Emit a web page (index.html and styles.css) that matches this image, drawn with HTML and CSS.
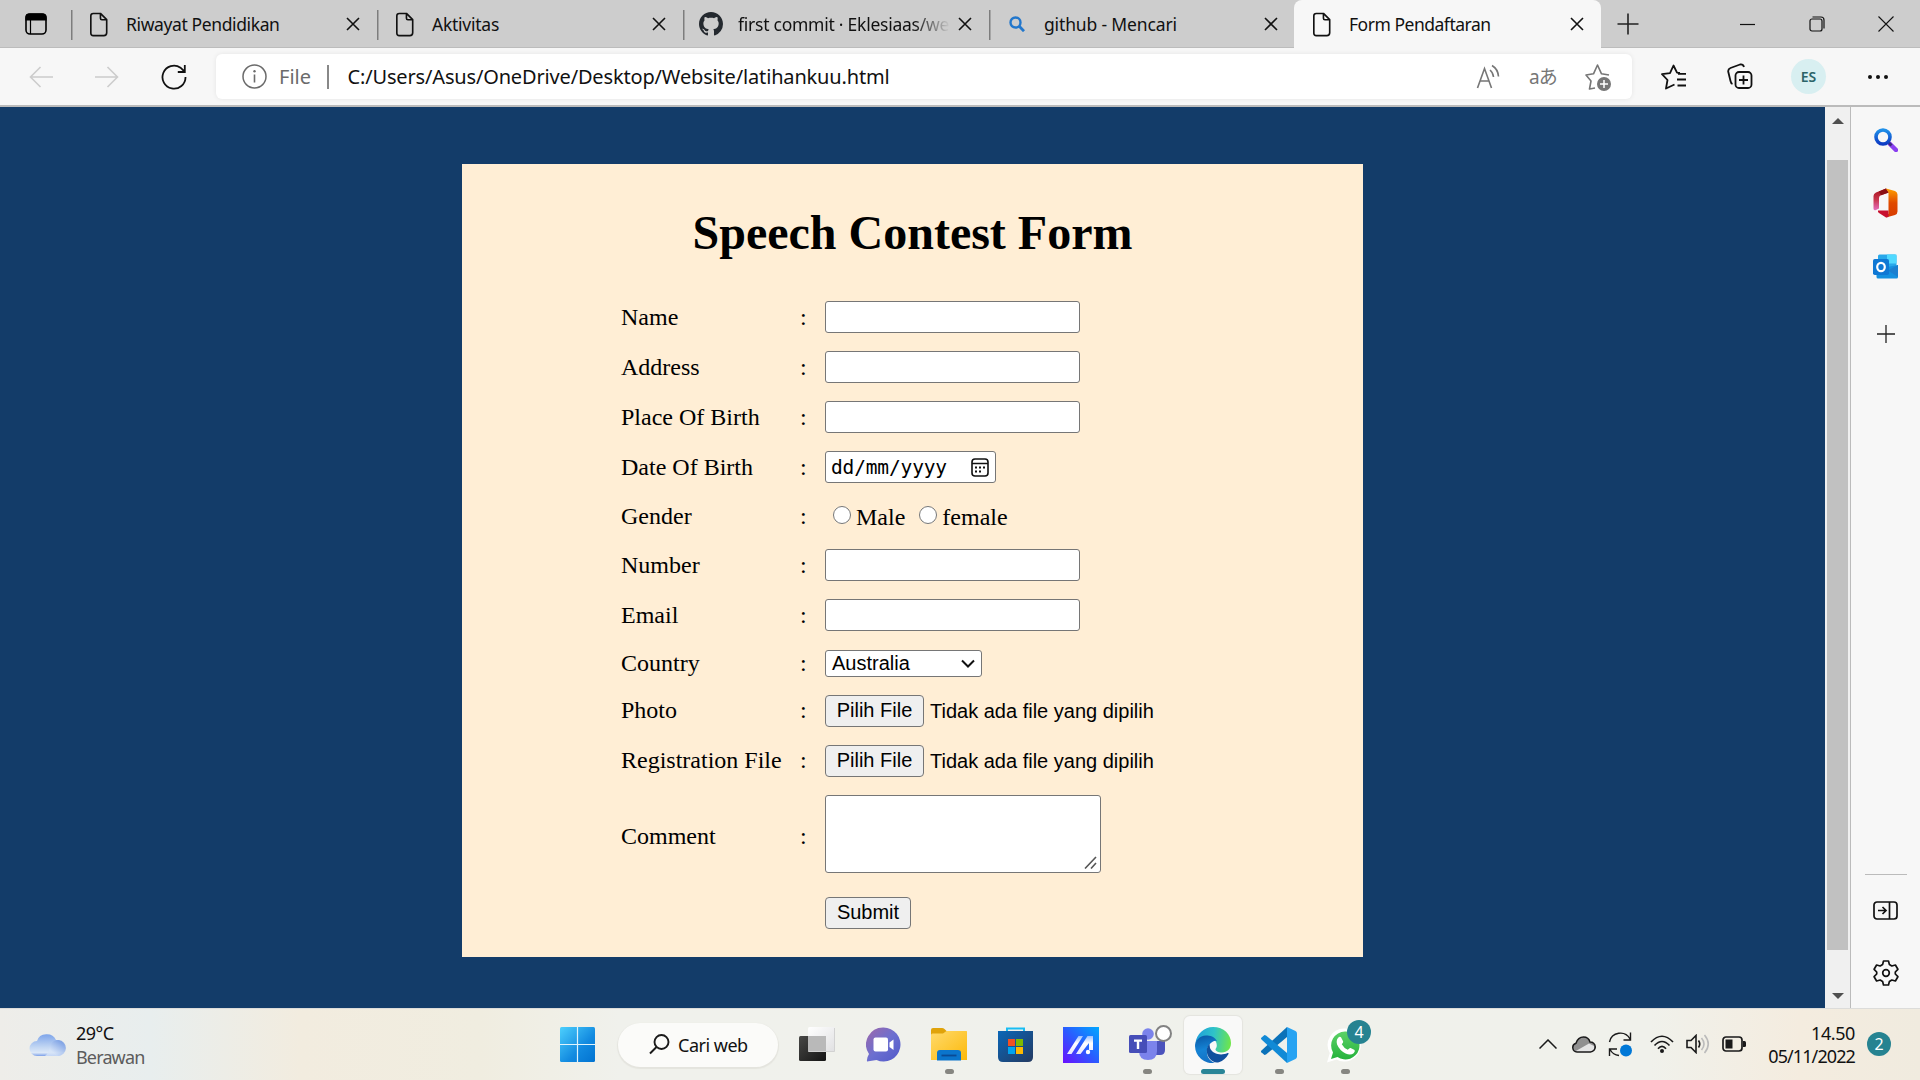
FILE: index.html
```html
<!DOCTYPE html>
<html lang="id">
<head>
<meta charset="utf-8">
<title>Form Pendaftaran</title>
<link rel="stylesheet" href="styles.css">
</head>
<body>
<svg class="defs" width="0" height="0">
  <defs>
    <symbol id="doc" viewBox="0 0 20 26"><path d="M4 1.5h7.5l6.5 6.500v13.500q0 3-3 3H4q-2.500 0-2.500-2.500V4Q1.500 1.500 4 1.500ZM11.500 1.500v5q0 1.500 1.500 1.500h5" fill="none" stroke="#111" stroke-width="1.7" stroke-linejoin="round"/></symbol>
    <symbol id="x" viewBox="0 0 14 14"><path d="M1 1l12 12M13 1L1 13" stroke="#111" stroke-width="1.6" fill="none"/></symbol>
    <linearGradient id="win" x1="0" y1="0" x2="1" y2="1"><stop offset="0" stop-color="#4dd0fd"/><stop offset=".6" stop-color="#128ae0"/><stop offset="1" stop-color="#0273d1"/></linearGradient>
    <linearGradient id="cloud" x1="0" y1="0" x2="0" y2="1"><stop offset="0" stop-color="#7ea5ea"/><stop offset=".6" stop-color="#c3d7f3"/><stop offset=".85" stop-color="#dce8f8"/><stop offset="1" stop-color="#7b9fe8"/></linearGradient>
    <linearGradient id="cloud2" x1="1" y1="0" x2="0" y2="1"><stop offset="0" stop-color="#5a86dc"/><stop offset=".7" stop-color="#d6e4f8"/></linearGradient>
    <linearGradient id="dark" x1="0" y1="0" x2="1" y2="1"><stop offset="0" stop-color="#484846"/><stop offset="1" stop-color="#141414"/></linearGradient>
    <linearGradient id="glass" x1="0" y1="0" x2="1" y2="1"><stop offset="0" stop-color="#ffffff"/><stop offset="1" stop-color="#e0e0e2"/></linearGradient>
    <linearGradient id="chat" x1="0" y1="0" x2="1" y2="1"><stop offset="0" stop-color="#a068a8"/><stop offset=".5" stop-color="#6c6fd0"/><stop offset="1" stop-color="#5059c9"/></linearGradient>
    <linearGradient id="folder" x1="0" y1="0" x2="1" y2="1"><stop offset="0" stop-color="#ffda6c"/><stop offset="1" stop-color="#fcb90a"/></linearGradient>
    <linearGradient id="store" x1="0" y1="0" x2="1" y2="1"><stop offset="0" stop-color="#0a67b8"/><stop offset="1" stop-color="#243a61"/></linearGradient>
    <linearGradient id="arm" x1="0" y1="1" x2="1" y2="0"><stop offset="0" stop-color="#6a10ff"/><stop offset=".5" stop-color="#2a5cff"/><stop offset="1" stop-color="#00a8ff"/></linearGradient>
    <linearGradient id="armw" x1="0" y1="1" x2="0" y2="0"><stop offset="0" stop-color="#e8e8ff"/><stop offset=".6" stop-color="#fff"/><stop offset="1" stop-color="#9cc0ff"/></linearGradient>
    <linearGradient id="edgeTop" x1="0" y1=".4" x2="1" y2=".5"><stop offset="0" stop-color="#1f9fdc"/><stop offset=".5" stop-color="#2fc3c8"/><stop offset="1" stop-color="#6fe64a"/></linearGradient>
    <linearGradient id="edgeMid" x1=".3" y1="0" x2=".5" y2="1"><stop offset="0" stop-color="#0a5aa8"/><stop offset=".5" stop-color="#1583d4"/><stop offset="1" stop-color="#1470c4"/></linearGradient>
    <linearGradient id="wa" x1="0" y1="0" x2="0" y2="1"><stop offset="0" stop-color="#5cd267"/><stop offset="1" stop-color="#25b23c"/></linearGradient>
    <linearGradient id="lens" x1="0" y1="0" x2="0" y2="1"><stop offset="0" stop-color="#1f8fe8"/><stop offset="1" stop-color="#0d3bc4"/></linearGradient>
    <linearGradient id="offL" x1="0" y1="0" x2="0" y2="1"><stop offset="0" stop-color="#a8101c"/><stop offset=".5" stop-color="#c8354c"/><stop offset="1" stop-color="#e56fc0"/></linearGradient>
    <linearGradient id="offR" x1="0" y1="0" x2="0" y2="1"><stop offset="0" stop-color="#ffa000"/><stop offset=".5" stop-color="#e04a00"/><stop offset="1" stop-color="#d83b01"/></linearGradient>
  </defs>
</svg>
<div class="screen">
  <header class="tabs">
    <div class="tab-menu"><svg width="22" height="22" viewBox="0 0 22 22"><rect x="1" y="1" width="20" height="20" rx="4" fill="none" stroke="#000" stroke-width="1.6"/><path d="M1 7V4q0-3 3-3h14q3 0 3 3v3ZM5.500 7v14" stroke="#000" stroke-width="1.2"/></svg></div>
    <div class="tab"><svg class="doc"><use href="#doc"/></svg><span class="tab-title t1">Riwayat Pendidikan</span><svg class="x"><use href="#x"/></svg></div>
    <div class="tab"><svg class="doc"><use href="#doc"/></svg><span class="tab-title">Aktivitas</span><svg class="x"><use href="#x"/></svg></div>
    <div class="tab"><svg class="gh" viewBox="0 0 16 16"><path fill="#24292f" d="M8 0C3.580 0 0 3.580 0 8c0 3.540 2.290 6.530 5.470 7.590.4.070.55-.17.55-.38 0-.19-.01-.82-.01-1.490-2.010.37-2.530-.49-2.690-.94-.09-.23-.48-.94-.82-1.130-.28-.15-.68-.52-.01-.53.63-.01 1.080.58 1.230.82.72 1.210 1.870.87 2.330.66.07-.52.28-.87.51-1.070-1.780-.2-3.640-.89-3.640-3.950 0-.87.31-1.590.82-2.150-.08-.2-.36-1.020.08-2.120 0 0 .67-.21 2.200.82.64-.18 1.320-.27 2-.27s1.360.09 2 .27c1.530-1.040 2.200-.82 2.200-.82.44 1.100.16 1.920.08 2.120.51.56.82 1.270.82 2.150 0 3.070-1.870 3.750-3.650 3.950.29.25.54.73.54 1.480 0 1.070-.01 1.930-.01 2.200 0 .21.15.46.55.38A8.010 8.010 0 0 0 16 8c0-4.420-3.580-8-8-8Z"/></svg><span class="tab-title fade">first commit · Eklesiaas/we</span><svg class="x"><use href="#x"/></svg></div>
    <div class="tab"><svg class="srch" viewBox="0 0 16 16"><circle cx="6.500" cy="6.500" r="5" fill="none" stroke="#2277cc" stroke-width="2.400"/><path d="M10 10l5 5.200" stroke="#2277cc" stroke-width="2.800"/></svg><span class="tab-title t4">github - Mencari</span><svg class="x"><use href="#x"/></svg></div>
    <div class="tab active"><svg class="doc"><use href="#doc"/></svg><span class="tab-title t5">Form Pendaftaran</span><svg class="x"><use href="#x"/></svg></div>
    <svg class="newtab" width="22" height="22" viewBox="0 0 22 22"><path d="M11 .5v21M.5 11h21" stroke="#222" stroke-width="1.600"/></svg>
    <div class="win-buttons">
      <svg width="16" height="16" viewBox="0 0 16 16"><path d="M0 8.500h15" stroke="#111" stroke-width="1.200"/></svg>
      <svg width="16" height="16" viewBox="0 0 16 16"><rect x="1" y="3" width="12" height="12" rx="2" fill="none" stroke="#111" stroke-width="1.200"/><path d="M3.500 1h8.500q3 0 3 3v8.500" fill="none" stroke="#111" stroke-width="1.200"/></svg>
      <svg width="16" height="16" viewBox="0 0 16 16"><path d="M.5 .5l15 15M15.500 .5l-15 15" stroke="#111" stroke-width="1.100"/></svg>
    </div>
  </header>

  <nav class="toolbar">
    <div class="nav-buttons">
      <svg width="24" height="24" viewBox="0 0 24 24" fill="none" stroke="#ccc" stroke-width="1.600"><path d="M24 12H1.500M11.500 2L1.500 12l10 10"/></svg>
      <svg width="24" height="24" viewBox="0 0 24 24" fill="none" stroke="#ccc" stroke-width="1.600"><path d="M0 12h22.500M12.500 2l10 10-10 10"/></svg>
      <svg width="26" height="26" viewBox="0 0 26 26" fill="none" stroke="#111" stroke-width="1.800"><path d="M24.500 13A11.500 11.500 0 1 1 19.500 3.700L23.500 7.500M23.800 1v7h-7"/></svg>
    </div>
    <div class="address">
      <svg width="25" height="25" viewBox="0 0 25 25"><circle cx="12.500" cy="12.500" r="11.500" fill="none" stroke="#6b6b6b" stroke-width="1.500"/><path d="M12.500 10.500v8" stroke="#6b6b6b" stroke-width="1.600"/><circle cx="12.500" cy="7.300" r="1.200" fill="#6b6b6b"/></svg>
      <span class="scheme">File</span><i class="bar"></i>
      <span class="url">C:/Users/Asus/OneDrive/Desktop/Website/latihankuu.html</span>
      <div class="address-icons">
        <svg width="26" height="26" viewBox="0 0 26 26" fill="none" stroke="#767676" stroke-width="1.600"><path d="M1.500 24L8.500 4.500 15.500 24M4 17h9M14 6q3 2.500 3.500 7M16 1.500q6 3.500 6.500 11"/></svg>
        <span class="translate">aあ</span>
        <svg width="26" height="28" viewBox="0 0 26 28"><path d="M10 25l-5.500 1 1.500-8L1 12l7.500-1.200L12.500 2l4 8.800L24 12" fill="none" stroke="#767676" stroke-width="1.600" stroke-linejoin="round"/><circle cx="19" cy="21" r="7" fill="#767676"/><path d="M19 17v8M15 21h8" stroke="#fff" stroke-width="1.500"/></svg>
      </div>
    </div>
    <div class="tools">
      <svg width="26" height="26" viewBox="0 0 26 26" fill="none" stroke="#111" stroke-width="1.800" stroke-linejoin="round"><path d="M13.500 20.500L5 24.500l1.500-8.500L1 10.200l8-1L12.500 1.500l3.500 7.200 3 .3M17 9.800h8M16 15.500h9M16.500 21.500h8.500"/></svg>
      <svg width="26" height="27" viewBox="0 0 26 27" fill="none" stroke="#111" stroke-width="1.800"><rect x="8.500" y="9" width="16" height="16" rx="3.500"/><path d="M16.500 12.500v9M12 17h9M5.500 21Q4 20.500 3.500 18L1.200 8.500Q1 6 3.500 5L13 1.500q3-.7 4 2.500"/></svg>
      <span class="avatar">ES</span>
      <svg width="22" height="6" viewBox="0 0 22 6" fill="#111"><circle cx="3" cy="3" r="2"/><circle cx="11" cy="3" r="2"/><circle cx="19" cy="3" r="2"/></svg>
    </div>
  </nav>

  <div class="middle">
    <main class="page">
      <form class="card">
        <h1>Speech Contest Form</h1>
        <div class="fields">
          <label>Name</label><span>:</span><div><input class="box" type="text"></div>
          <label>Address</label><span>:</span><div><input class="box" type="text"></div>
          <label>Place Of Birth</label><span>:</span><div><input class="box" type="text"></div>
          <label>Date Of Birth</label><span>:</span><div><div class="box date"><span>dd/mm/yyyy</span><svg width="18" height="19" viewBox="0 0 18 19"><rect x="1" y="1" width="16" height="17" rx="3" fill="none" stroke="#111" stroke-width="1.600"/><path d="M1 5.500h16" stroke="#111" stroke-width="1.500"/><path d="M4 9.500h2M8 9.500h2M12 9.500h2M4 13.500h2M8 13.500h2" stroke="#111" stroke-width="2"/></svg></div></div>
          <label>Gender</label><span>:</span><div class="gender"><input type="radio" name="g"><b>Male</b><input type="radio" name="g"><b>female</b></div>
          <label>Number</label><span>:</span><div><input class="box" type="text"></div>
          <label>Email</label><span>:</span><div><input class="box" type="text"></div>
          <label>Country</label><span>:</span><div><div class="box select">Australia<svg width="14" height="9" viewBox="0 0 14 9"><path d="M1 1.500l6 6 6-6" fill="none" stroke="#111" stroke-width="2"/></svg></div></div>
          <label class="lift">Photo</label><span class="lift">:</span><div><button class="btn pick" type="button">Pilih File</button><em>Tidak ada file yang dipilih</em></div>
          <label class="lift">Registration File</label><span class="lift">:</span><div><button class="btn pick" type="button">Pilih File</button><em>Tidak ada file yang dipilih</em></div>
          <label class="lift">Comment</label><span class="lift">:</span><div class="comment"><div class="box area"><svg width="13" height="13" viewBox="0 0 13 13"><path d="M1 12.500L12 1M7 12.500l5-5.500" stroke="#555" stroke-width="1.600"/></svg></div></div>
          <label></label><span></span><div><button class="btn submit" type="button">Submit</button></div>
        </div>
      </form>
    </main>
    <div class="scrollbar"><i class="up"></i><i class="thumb"></i><i class="down"></i></div>
    <aside class="sidebar">
      <svg width="24" height="24" viewBox="0 0 24 24"><path d="M16 16l6 6" stroke="#8a3ff0" stroke-width="4.500" stroke-linecap="round"/><path d="M14.500 14.500l3 3" stroke="#3b2a80" stroke-width="3"/><circle cx="9" cy="9" r="7" fill="#f7f7f7" stroke="url(#lens)" stroke-width="3.600"/></svg>
      <svg width="25" height="30" viewBox="0 0 25 30"><path d="M13 .5L3 4.500Q.5 5.500 .5 8v12.500q0 2.500 2.500 1.500l3-1.500V10q0-2 2-2.800l7.500-2.700Z" fill="url(#offL)"/><path d="M13 .5l-7 3 2 3.700 8-2.700Z" fill="#8a0f14"/><path d="M13 .5l9 2.500q2.500 1 2.500 3.500v17q0 2.500-2.500 3.500l-9 2.500 2.500-4V4.500Z" fill="url(#offR)"/><path d="M5 22.500h10.500v6.500l-2.500.5-7-4.500Q4.500 24 5 22.500Z" fill="#c8102e"/></svg>
      <svg width="25" height="25" viewBox="0 0 25 25"><path d="M5 2q0-1.500 1.500-1.500H22q1.500 0 1.500 1.500v13H5Z" fill="#28a8ea"/><path d="M14 .5h9.500v9H14Z" fill="#50d9ff"/><path d="M5 9.500h9V18H5Z" fill="#0364b8"/><path d="M3.500 15L25 11v12q0 1.500-1.500 1.500H5q-1.500 0-1.500-1.500Z" fill="#1490df"/><path d="M15 16.500L25 11v12Z" fill="#1a7fd0"/><rect x="0" y="5" width="16" height="16" rx="1.800" fill="#0f78d4"/><ellipse cx="8" cy="13" rx="3.800" ry="4.200" fill="none" stroke="#fff" stroke-width="2.200"/></svg>
      <svg width="18" height="18" viewBox="0 0 18 18"><path d="M9 0v18M0 9h18" stroke="#222" stroke-width="1.300"/></svg>
      <i class="rule"></i>
      <svg width="25" height="19" viewBox="0 0 25 19" fill="none" stroke="#111" stroke-width="1.700"><rect x="1" y="1" width="23" height="17" rx="3"/><path d="M16.500 1v17M5 9.500h8M9.500 6l3.500 3.500L9.500 13"/></svg>
      <svg width="26" height="26" viewBox="0 0 26 26" fill="none" stroke="#111" stroke-width="1.700" stroke-linejoin="round"><path d="M10.500 1h5l.9 3.600 2.400 1.400 3.600-1 2.500 4.300L22.300 12v2l2.600 2.700-2.500 4.300-3.600-1-2.400 1.400-.9 3.600h-5l-.9-3.600L7.200 20l-3.600 1-2.500-4.300L3.700 14v-2L1.100 9.300 3.600 5l3.600 1 2.400-1.400Z"/><circle cx="13" cy="13" r="3.300"/></svg>
    </aside>
  </div>

  <footer class="taskbar">
    <div class="weather">
      <svg width="37" height="24" viewBox="0 0 37 24"><path d="M8 23a7.500 7.500 0 0 1 0-15 10 9 0 0 1 19-1A8 8 0 0 1 29 23Z" fill="url(#cloud)"/><path d="M29 23a8 8 0 1 0-8-9q-1 6-5 9Z" fill="url(#cloud2)" opacity=".8"/></svg>
      <div><p>29°C</p><p class="dim">Berawan</p></div>
    </div>
    <div class="apps">
      <div class="cell"><svg width="35" height="35" viewBox="0 0 35 35"><rect width="35" height="35" rx="1.500" fill="url(#win)"/><path d="M17.500 0v35M0 17.500h35" stroke="#dff3fc" stroke-width="1.200"/></svg></div>
      <div class="pill"><svg width="21" height="21" viewBox="0 0 21 21"><circle cx="12.500" cy="8" r="7" fill="none" stroke="#1a1a1a" stroke-width="1.900"/><path d="M7.500 13L1 19.500" stroke="#1a1a1a" stroke-width="2"/></svg><span>Cari web</span></div>
      <div class="cell"><svg width="36" height="35" viewBox="0 0 36 35"><rect y="9" width="27" height="25" rx="1.500" fill="url(#dark)"/><rect x="9" y="0" width="27" height="25" rx="1.500" fill="url(#glass)"/><path d="M9 9h18v16H10.500Q9 25 9 23.500Z" fill="#b9b9b9"/><path d="M10 24.500h25.500V1" fill="none" stroke="#d2d2d2" stroke-width="1"/></svg></div>
      <div class="cell"><svg width="35" height="35" viewBox="0 0 35 35"><path d="M17.500 .5a17 17 0 1 1-7 32.500L1 34.500Q.5 31 3 27A17 17 0 0 1 17.500 .5Z" fill="url(#chat)"/><rect x="7.500" y="10.500" width="14.500" height="14" rx="2" fill="#fff"/><path d="M23.500 15.500l4-3v10.500l-4-3Z" fill="#fff"/></svg></div>
      <div class="cell run"><svg width="36" height="35" viewBox="0 0 36 35"><path d="M0 3Q0 1 2 1h9q1.500 0 2.500 1l2 2H34q2 0 2 2v4H0Z" fill="#e0a30a"/><path d="M0 8q0-1.500 1.500-1.500H12L15.500 4H35q1 0 1 1v28H0Z" fill="url(#folder)"/><path d="M6 33.500V26q0-3 3-3h18q3 0 3 3v7.500Z" fill="#0b75cc"/><path d="M10.500 28.500h15" stroke="#0a4a94" stroke-width="1.800"/></svg></div>
      <div class="cell"><svg width="35" height="35" viewBox="0 0 35 35"><path d="M9 5V1.500h17V5" fill="none" stroke="#19bdf3" stroke-width="2"/><path d="M0 4h35v26q0 5-5 5H5q-5 0-5-5Z" fill="url(#store)"/><path d="M10 12h7v7h-7Z" fill="#f25022"/><path d="M18 12h7v7h-7Z" fill="#7fba00"/><path d="M10 20h7v7h-7Z" fill="#00a4ef"/><path d="M18 20h7v7h-7Z" fill="#ffb900"/></svg></div>
      <div class="cell"><svg width="36" height="36" viewBox="0 0 36 36"><path d="M0 0h36v36H0Z" fill="url(#arm)"/><path d="M4 27L15.500 9H20L8.500 27ZM13 27L24.500 9H30v14h-4v-7l-8.500 11Z" fill="url(#armw)"/><circle cx="25" cy="25" r="2.200" fill="#fff"/></svg></div>
      <div class="cell run"><svg class="teams" width="43" height="37" viewBox="0 0 43 37"><path d="M27 16h9v9q0 5-5 5h-4Z" fill="#4b53bc"/><circle cx="19" cy="9" r="5.800" fill="#7b83eb"/><path d="M10 16h18v10q0 9-9 9t-9-9Z" fill="#7b83eb"/><rect y="10" width="18" height="18" rx="1.500" fill="#464eb8"/><path d="M5 14.500h8v2.200h-2.800V24H7.800v-7.300H5Z" fill="#fff"/><circle cx="34.500" cy="8.500" r="7.500" fill="#fff" stroke="#828282" stroke-width="2"/></svg></div>
      <div class="cell run focus"><svg width="36" height="36" viewBox="0 0 36 36"><path d="M.5 16A18 18 0 0 1 18 0c11 0 18 7.500 18 16 0 6-4 9.500-9 9.500-4 0-6.500-1.500-6.500-3 0-1 1.300-1.800 1.300-4C21.800 13 17 10 12 10 6 10 2 13 .5 16Z" fill="url(#edgeTop)"/><path d="M22 14C19.500 9.500 15 8.500 11 8.500 4.500 9 0 13.500 0 19a17.500 17.500 0 0 0 20 17C13 33 11.500 28 12 23c.4-4 3-6.500 6-8.500q2-1.200 4-.5Z" fill="url(#edgeMid)"/><path d="M14.500 17C11 20 10.500 27 15 32q4 4.500 9 3.200 6-2 9.500-8.200.5-1.500-1-.9c-6 3-15 1.400-17.500-5Z" fill="#10509e"/></svg></div>
      <div class="cell run"><svg width="36" height="36" viewBox="0 0 36 36"><path d="M26 0v10L5 27.500 3.500 28 .3 25.300Q-.5 24.500.5 23.500Z" fill="#0b72b9"/><path d="M26 36V26L5 8.500 3.500 8 .3 10.700Q-.5 11.500.5 12.500Z" fill="#118ad6"/><path d="M26 0l8.500 4Q36 4.800 36 6.500v23q0 1.700-1.500 2.500L26 36Z" fill="#27a3f2"/></svg></div>
      <div class="cell run"><svg width="36" height="36" viewBox="0 0 36 36"><path d="M18 1.500a16.500 16.500 0 1 1-8.500 31L0 35.500 2.800 26A16.500 16.500 0 0 1 18 1.500Z" fill="#fff"/><path d="M18 4.500a14 14 0 1 1-7.500 25.500l-6.500 2 2-6.500A14 14 0 0 1 18 4.500Z" fill="url(#wa)"/><path d="M11 11q1.500-1.800 3-.8l2.200 4.300q.2 1.200-1.400 2.700 2.200 4 6 5.600 1.800-2.200 2.800-1.800l4 2q.8 1.500-1 3.200-3 2.500-8 .3-6-3-8.500-9-1.200-4 .9-6.500Z" fill="#fff"/></svg><b class="badge">4</b></div>
    </div>
    <div class="tray">
      <svg class="chev" width="18" height="10" viewBox="0 0 18 10"><path d="M.5 9.500L9 1l8.500 8.500" fill="none" stroke="#1a1a1a" stroke-width="1.500"/></svg>
      <svg width="24" height="17" viewBox="0 0 24 17"><path d="M5 16a4.500 4.500 0 0 1-1-8.800Q6 1 11.500 1q5 0 6.500 5a5 5 0 0 1 .5 10Z" fill="#909090"/><path d="M3 15.500L17 7.500l5 2.500v4l-3.500 2H5Z" fill="#e4e4e4"/><path d="M5 16a4.500 4.500 0 0 1-1-8.800Q6 1 11.500 1q5 0 6.500 5a5 5 0 0 1 .5 10Z" fill="none" stroke="#1a1a1a" stroke-width="1.500"/></svg>
      <svg width="24" height="25" viewBox="0 0 24 25"><path d="M1.500 10A11 11 0 0 1 22 7M22.500 .5v7.500h-7M11 23.500Q5 23 2 17.500M1.500 24v-7H9" fill="none" stroke="#1a1a1a" stroke-width="1.400"/><circle cx="18" cy="18.500" r="6" fill="#0078d7"/></svg>
      <svg class="wifi" width="24" height="18" viewBox="0 0 24 18"><path d="M1 7q11-11.500 22 0M4.500 10.500q7.500-8 15 0M8 13.700q4-4.500 8 0" fill="none" stroke="#1a1a1a" stroke-width="1.700"/><circle cx="12" cy="16" r="2" fill="#1a1a1a"/></svg>
      <svg width="24" height="20" viewBox="0 0 24 20" fill="none" stroke-width="1.600"><path d="M1 6.500h4l5-5v17l-5-5H1ZM12.500 6.500q2.500 3.500 0 7" stroke="#1a1a1a"/><path d="M15.500 4q5 6 0 12M18.500 1q7.500 9 0 18" stroke="#bbb"/></svg>
      <svg width="24" height="16" viewBox="0 0 24 16"><rect x="1" y="1" width="19" height="14" rx="3" fill="none" stroke="#1a1a1a" stroke-width="1.700"/><path d="M3.500 3.500h7v9h-7Z" fill="#1a1a1a"/><path d="M21 5h1.500q1.500 0 1.500 1.500v3q0 1.500-1.500 1.500H21Z" fill="#1a1a1a"/></svg>
      <div class="clock"><p>14.50</p><p class="day">05/11/2022</p></div>
      <b class="count">2</b>
    </div>
  </footer>
</div>
</body>
</html>
```
FILE: styles.css
```css
* { box-sizing: border-box; }
body { margin: 0; font-family: "Noto Sans", "Open Sans", sans-serif; color: #111; overflow: hidden; }
p { margin: 0; }
svg { display: block; flex: none; }
.defs { position: absolute; }
.screen { width: 1920px; height: 1080px; display: flex; flex-direction: column; }

.tabs { height: 48px; flex: none; background: #cdcdcd; display: flex; align-items: center; box-shadow: inset 0 -1px #bcbcbc; }
.tab-menu { width: 71px; flex: none; padding-left: 25px; }
.tab { width: 306px; flex: none; height: 48px; display: flex; align-items: center; padding: 0 17px 0 18px; background: linear-gradient(#7d7d7d, #7d7d7d) 0 10px / 1.500px 30px no-repeat; }
.doc { width: 20px; height: 25px; }
.gh { width: 24px; height: 24px; margin: 0 -2px; }
.srch { width: 16px; height: 16px; margin: 0 2px; }
.x { width: 14px; height: 14px; }
.tab-title { flex: 1; margin-left: 17px; padding-bottom: 1px; font-size: 17.500px; line-height: 24px; letter-spacing: -.25px; white-space: nowrap; }
.t1 { letter-spacing: -.38px; }
.t4 { letter-spacing: -.15px; }
.t5 { letter-spacing: -.48px; }
.fade { -webkit-mask-image: linear-gradient(90deg, #000 175px, transparent 212px); mask-image: linear-gradient(90deg, #000 175px, transparent 212px); }
.active { background: #f7f7f7; border-radius: 8px 8px 0 0; margin-left: -1px; width: 307px; }
.newtab { margin-left: 16px; }
.win-buttons { margin-left: auto; display: flex; gap: 53px; padding-right: 26px; }

.toolbar { height: 59px; flex: none; background: #f7f7f7; border-bottom: 2px solid #bbb; display: flex; align-items: center; }
.nav-buttons { width: 216px; display: flex; align-items: center; gap: 42px; padding-left: 29px; }
.address { width: 1416px; height: 45px; background: #fff; border-radius: 6px; display: flex; align-items: center; padding: 0 21px 0 26px; box-shadow: 0 0 5px rgba(0,0,0,.08); font-size: 20px; }
.scheme { margin-left: 12px; width: 48px; color: #6b6b6b; }
.bar { width: 1.500px; height: 24px; background: #888; }
.url { margin-left: 19px; letter-spacing: -.16px; white-space: nowrap; }
.address-icons { margin-left: auto; display: flex; align-items: center; color: #767676; }
.translate { width: 28px; margin: 0 28px 0 27px; font: 19px "Noto Sans", "Noto Sans CJK JP", sans-serif; line-height: 26px; letter-spacing: -1px; white-space: nowrap; }
.tools { flex: 1; display: flex; align-items: center; padding-left: 29px; }
.tools > :nth-child(2) { margin-left: 40px; }
.avatar { width: 35px; height: 35px; margin: 0 41px 0 38px; border-radius: 50%; background: #d8eff1; color: #2b6468; font-size: 14px; font-weight: 600; line-height: 36px; text-align: center; flex: none; }

.middle { height: 901px; flex: none; display: flex; background: #f7f7f7; }
.page { width: 1825px; background: #133c69; padding: 57px 0 0 462px; }
.card { width: 901px; height: 793px; background: #ffeed5; padding: 41px 159px 0; font: 24px "Liberation Serif", "Times New Roman", serif; color: #000; }
h1 { margin: 0 0 32px; font-size: 48px; line-height: 55px; text-align: center; white-space: nowrap; }
.fields { display: grid; grid-template-columns: 179px 25px 1fr; grid-template-rows: 50px 50px 50px 50px 48px 50px 50px 46px 50px 50px 102px 50px; align-items: center; line-height: 28px; }
.fields > div { display: flex; align-items: center; white-space: nowrap; }
.lift { padding-bottom: 2px; }
.box { width: 255px; height: 32px; background: #fff; border: 1.500px solid #767676; border-radius: 3px; padding: 0 6px; margin: 0; outline: 0; }
.date { width: 171px; display: flex; justify-content: space-between; align-items: center; padding: 0 6px 0 5px; font: 19.500px "DejaVu Sans Mono", monospace; letter-spacing: -.15px; }
.gender input { width: 18px; height: 18px; margin: -3px 5px 0 8px; }
.gender b { font-weight: normal; margin-right: 6px; padding-top: 2px; }
.select { width: 157px; height: 27px; display: flex; justify-content: space-between; align-items: center; font: 20px "Liberation Sans", Arial, sans-serif; }
.btn { height: 32px; padding: 0 0 2px; font: 20px/27px "Liberation Sans", Arial, sans-serif; color: #000; background: #efefef; border: 1.500px solid #767676; border-radius: 4px; }
.pick { width: 99px; }
.submit { width: 86px; }
em { font: 20px "Liberation Sans", Arial, sans-serif; margin-left: 6px; }
.area { width: 276px; height: 78px; margin-top: -6px; display: flex; align-items: flex-end; justify-content: flex-end; padding: 0 3px 3px 0; }

.scrollbar { width: 26px; background: #f0f0f0; border-right: 1px solid #bbb; display: flex; flex-direction: column; align-items: center; padding: 11px 0 9px; }
.up { border: 6px solid transparent; border-top: 0; border-bottom-color: #505050; }
.thumb { width: 21px; height: 790px; background: #c1c1c1; margin: 36px 1px 43px 0; }
.down { border: 6px solid transparent; border-bottom: 0; border-top-color: #505050; }
.sidebar { flex: 1; display: flex; flex-direction: column; align-items: center; padding: 21px 0 22px; }
.sidebar svg:nth-child(2) { margin-top: 36px; }
.sidebar svg:nth-child(3) { margin-top: 36px; }
.sidebar svg:nth-child(4) { margin-top: 46px; }
.rule { width: 42px; height: 1px; background: #bbb; margin-top: auto; margin-bottom: 26px; }
.sidebar svg:last-child { margin-top: 40px; }

.taskbar { height: 72px; flex: none; display: flex; align-items: center; background: linear-gradient(90deg, #eeede9 0, #e8eeee 150px, #f2ecdf 300px, #f0ede0 480px, #f0f1ec 620px, #f0f1eb 1650px, #f4ecdf 1800px, #f0ebdf 1920px); box-shadow: inset 0 1px #dcdcda; font-size: 18px; }
.weather { width: 544px; flex: none; display: flex; align-items: center; gap: 10px; padding: 2px 0 0 29px; line-height: 24px; letter-spacing: -.5px; }
.dim { color: #5c5c5c; letter-spacing: -.85px; }
.apps { display: flex; align-items: center; }
.cell { width: 66px; height: 72px; display: flex; align-items: center; justify-content: center; position: relative; padding-top: 1px; }
.run::after { content: ""; position: absolute; bottom: 6px; left: 29px; width: 9px; height: 5px; border-radius: 3px; background: #868681; }
.focus { width: 58px; height: 58px; margin: 2px 4px 0; background: #f9f9f8; border-radius: 6px; box-shadow: 0 0 1px 1px #e4e4df; }
.focus svg { margin-top: -2px; }
.focus::after { width: 24px; left: 17px; bottom: 0; background: #2a8597; }
.pill { width: 160px; height: 44px; margin: 1px 6px 0 8px; border-radius: 22px; background: #fbfbf9; box-shadow: 0 1px 1px 1px #e4e4de; display: flex; align-items: center; gap: 8px; padding-left: 31px; letter-spacing: -.5px; white-space: nowrap; }
.teams { margin: -3px -7px 0 0; }
.badge { position: absolute; left: 35px; top: 12px; }
.badge, .count { width: 24px; height: 24px; border-radius: 50%; background: #268391; color: #fff; font-size: 16px; font-weight: normal; line-height: 24px; text-align: center; }
.tray { margin-left: auto; display: flex; align-items: center; gap: 12px; padding-right: 29px; }
.chev { margin-right: 3px; }
.wifi { margin-left: 6px; }
.clock { width: 97px; padding-top: 1px; text-align: right; line-height: 23px; letter-spacing: -.4px; white-space: nowrap; }
.day { letter-spacing: -.9px; }
```
